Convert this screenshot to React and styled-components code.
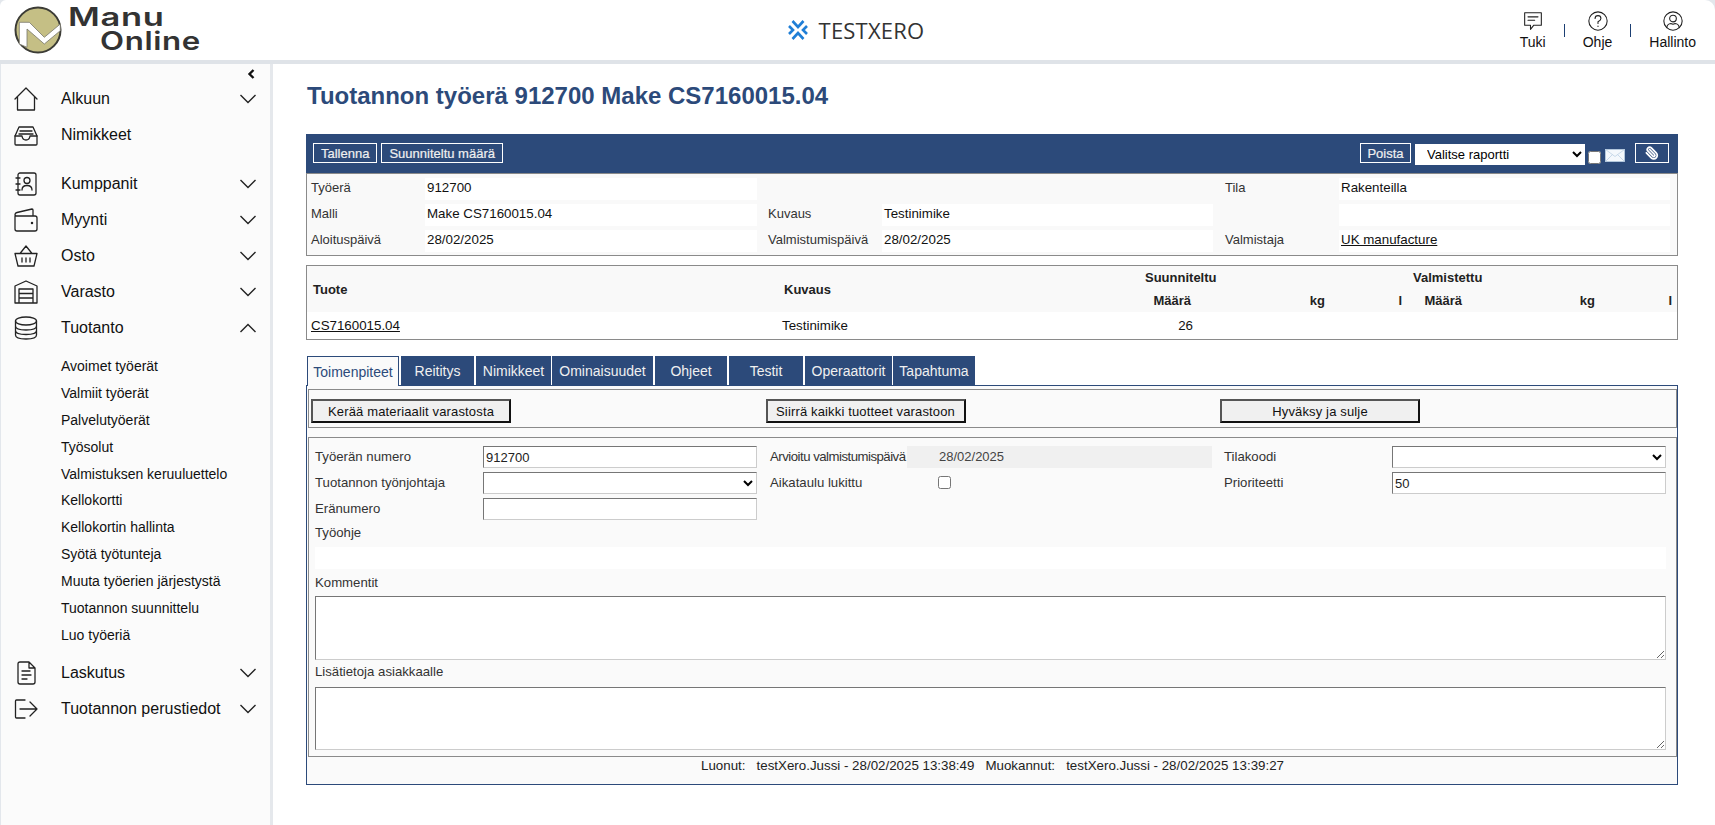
import React from "react";
import styled, { createGlobalStyle } from "styled-components";
import { Paperclip } from "lucide-react";

const NAVY = "#2c4a7a";

const Icon = ({ children, size = 24, view = "0 0 24 24", color = "#222", sw = 1.3 }) => (
  <svg width={size} height={size} viewBox={view} fill="none" stroke={color} strokeWidth={sw} strokeLinecap="round" strokeLinejoin="round">
    {children}
  </svg>
);

const HomeIcon = () => (
  <Icon><path d="M1 12 L12 1 L23 12 M3.500 10 V23 H20.500 V10" /></Icon>
);
const TrayIcon = () => (
  <Icon>
    <path d="M5 4 H19 L23 13 V21 Q23 22 22 22 H2 Q1 22 1 21 V13 Z" />
    <path d="M1 13 H8 Q8.500 17 12 17 Q15.500 17 16 13 H23 M6 8 H18 M5 11 H19" />
  </Icon>
);
const ContactsIcon = () => (
  <Icon>
    <rect x="4" y="1" width="18" height="22" rx="2" />
    <circle cx="13" cy="8.500" r="3" />
    <path d="M8 18 Q8 13.500 13 13.500 Q18 13.500 18 18 M2 6 H6 M2 12 H6 M2 18 H6" />
  </Icon>
);
const WalletIcon = () => (
  <Icon>
    <path d="M1 8 V21 Q1 23 3 23 H21 Q23 23 23 21 V10 Q23 8 21 8 H3 Q1 8 1 6.500 Q1 5 3 4.500 L18 1 Q19 1 19 2 V8" />
    <circle cx="18" cy="15" r="0.600" fill="#222" />
  </Icon>
);
const BasketIcon = () => (
  <Icon>
    <path d="M1 9.500 H23 L20 22 H4 Z M6 9.500 L12 2 L18 9.500 M8 14 V18 M12 14 V18 M16 14 V18" />
  </Icon>
);
const WarehouseIcon = () => (
  <Icon>
    <path d="M1 6 L12 1 L23 6 V23 H1 Z M5 23 V9 H19 V23 M5 13.500 H19 M5 18 H19" />
  </Icon>
);
const DatabaseIcon = () => (
  <Icon>
    <ellipse cx="12" cy="5" rx="10.500" ry="4" />
    <path d="M1.500 5 V19 C1.500 21.500 6 23 12 23 C18 23 22.500 21.500 22.500 19 V5 M1.500 10 C1.500 12.500 6 14 12 14 C18 14 22.500 12.500 22.500 10 M1.500 14.500 C1.500 17 6 18.500 12 18.500 C18 18.500 22.500 17 22.500 14.500" />
  </Icon>
);
const DocIcon = () => (
  <Icon>
    <path d="M4 3 Q4 1 6 1 H15 L21 7 V21 Q21 23 19 23 H6 Q4 23 4 21 Z M15 1 V7 H21 M8 10 H16 M8 14 H17 M8 18 H13" />
  </Icon>
);
const ExitIcon = () => (
  <Icon>
    <path d="M11 3 H2.500 Q1.500 3 1.500 4 V20 Q1.500 21 2.500 21 H11 M6 12 H23 M16 5 L23 12 L16 19" />
  </Icon>
);

const Chevron = ({ up }) => (
  <svg width="16" height="10" viewBox="0 0 16 10" fill="none" stroke="#222" strokeWidth="1.400">
    <path d={up ? "M0.500 9 L8 1.500 L15.500 9" : "M0.500 1 L8 8.500 L15.500 1"} />
  </svg>
);

const LogoMark = () => (
  <svg width="48" height="48" viewBox="0 0 48 48">
    <circle cx="24" cy="24" r="22.500" fill="#c5bf85" stroke="#3c3c36" strokeWidth="2" />
    <path d="M5.300 16.300 H15.300 L30.300 31.300 L46.300 18 V24.700 L30.300 38 L13 23 V41.300 L5.300 38 Z" fill="#fff" stroke="#77766a" strokeWidth="0.800" />
  </svg>
);

const XeroMark = () => (
  <svg width="20" height="20" viewBox="0 0 20 20" fill="none" stroke="#1f7ed6" strokeWidth="2.600">
    <path d="M4.500 1 L10 7 L15.500 1 M4.500 19 L10 13 L15.500 19 M1 6 L5 10 L1 14 M19 6 L15 10 L19 14" />
  </svg>
);

const GlobalStyle = createGlobalStyle`
  html, body {
    margin: 0;
    height: 100%;
    background: #e3e7ec;
  }
  body {
    font-family: "Liberation Sans", Arial, sans-serif;
    font-size: 13.330px;
    color: #111;
  }
  * {
    box-sizing: border-box;
  }
`;

const Page = styled.div`
  width: 1715px;
  height: 825px;
  background: #fff;
  border-radius: 6px 10px 0 0;
  overflow: hidden;
  display: flex;
  flex-direction: column;
`;

const Header = styled.header`
  height: 64px;
  flex: none;
  border-bottom: 4px solid #dfe3e8;
  display: grid;
  grid-template-columns: 1fr 1fr 1fr;
  align-items: center;
`;

const LogoWrap = styled.div`
  display: flex;
  align-items: center;
  padding-left: 14px;
  gap: 6px;
`;

const LogoText = styled.div`
  font-family: Inter, sans-serif;
  font-weight: 600;
  font-size: 25px;
  line-height: 24px;
  color: #333;
  letter-spacing: 0.5px;
  margin-top: -2px;
`;

const LogoLine = styled.div`
  padding-left: ${(p) => p.$indent || 0}px;
  transform: scaleX(${(p) => p.$scale});
  transform-origin: ${(p) => p.$indent || 0}px 0;
`;

const Brand = styled.div`
  display: flex;
  align-items: center;
  justify-content: center;
  gap: 11px;
  font-family: "Open Sans", sans-serif;
  font-size: 22px;
  letter-spacing: 0.2px;
  color: #333;
  padding-right: 3px;
`;

const HeadLinks = styled.div`
  display: flex;
  justify-content: flex-end;
  align-items: center;
  padding-right: 19px;
`;

const HeadLink = styled.div`
  display: flex;
  flex-direction: column;
  align-items: center;
  gap: 3px;
  font-size: 14px;
`;

const HeadSep = styled.span`
  width: 1px;
  height: 13px;
  background: #1c3f73;
  margin: 0 ${(p) => p.$gap || 20}px;
  align-self: center;
`;

const Body = styled.div`
  flex: 1;
  display: flex;
  min-height: 0;
`;

const Sidebar = styled.nav`
  width: 273px;
  flex: none;
  background: #fbfbfb;
  border-left: 1px solid #e3e7ec;
  border-right: 3px solid #e5e8ec;
  position: relative;
  padding-top: 17px;
`;

const CollapseArrow = styled.svg`
  position: absolute;
  top: 5px;
  left: 246px;
`;

const NavRow = styled.div`
  height: 36px;
  display: flex;
  align-items: center;
  padding: 0 14px 0 13px;
  font-size: 16px;
  margin-top: ${(p) => p.$top || 0}px;
`;

const NavIconBox = styled.span`
  width: 47px;
  display: flex;
  align-items: center;
`;

const NavLabel = styled.span`
  flex: 1;
`;

const SubList = styled.div`
  padding-top: 7px;
  padding-bottom: 6px;
`;

const SubItem = styled.div`
  height: 26.900px;
  line-height: 27px;
  padding-left: 60px;
  font-size: 14px;
`;

const Main = styled.main`
  flex: 1;
  padding: 15px 37px 0 33px;
  min-width: 0;
`;

const Title = styled.h1`
  margin: 0 0 22px 1px;
  height: 33px;
  font-size: 24px;
  line-height: 33px;
  font-weight: bold;
  color: ${NAVY};
`;

const Toolbar = styled.div`
  height: 39px;
  background: ${NAVY};
  display: flex;
  align-items: center;
  padding: 0 9px 1px 7px;
  gap: 4px;
`;

const ToolButton = styled.button`
  height: 20px;
  padding: 0 7px;
  background: ${NAVY};
  border: 1px solid #fff;
  color: #f0f0f0;
  font: 13px "Liberation Sans", Arial, sans-serif;
  -webkit-text-stroke: 0.2px #f0f0f0;
  display: flex;
  align-items: center;
  justify-content: center;
  width: ${(p) => (p.$width ? `${p.$width}px` : "auto")};
`;

const ToolSpacer = styled.div`
  flex: 1;
`;

const ReportSelect = styled.select`
  width: 170px;
  height: 21px;
  border: 0;
  background: #fff;
  font: 13px "Liberation Sans", Arial, sans-serif;
  padding-left: 8px;
  margin-top: 2px;
`;

const MailCheck = styled.input`
  width: 13px;
  height: 13px;
  margin: 8px 0 0 -1px;
`;

const MailGlyph = styled.svg`
  margin: 4px 6px 0 0;
`;

const ClipIcon = styled(Paperclip)`
  transform: scaleX(-1);
`;

const InfoPanel = styled.section`
  border: 1px solid #8a8a8a;
  background: #f9f9f9;
  padding: 4px 3px 3px 4px;
  display: grid;
  grid-template-columns: 114px 332px 11px 114px 331px 12px 114px 331px;
  grid-auto-rows: 22px;
  row-gap: 4px;
  margin-bottom: 9px;
`;

const InfoLabel = styled.div`
  grid-column: ${(p) => p.$col};
  line-height: 20px;
  font-size: 13px;
  color: #333;
`;

const InfoValue = styled.div`
  grid-column: ${(p) => p.$col};
  background: #fff;
  line-height: 20px;
  color: #111;
  padding-left: ${(p) => p.$pad || 2}px;
`;

const UnderlinedText = styled.span`
  text-decoration: underline;
`;

const TablePanel = styled.section`
  border: 1px solid #8a8a8a;
  background: #f9f9f9;
  margin-bottom: 16px;
`;

const ItemTable = styled.table`
  width: 1370px;
  table-layout: fixed;
  border-collapse: collapse;
`;

const HeadCell = styled.th`
  height: 23px;
  padding: 0 ${(p) => p.$right || 0}px 0 ${(p) => p.$left || 0}px;
  text-align: ${(p) => p.$align || "left"};
  font-size: 13px;
  font-weight: bold;
  color: #222;
`;

const DataRow = styled.tr`
  background: #fff;
`;

const DataCell = styled.td`
  height: 27px;
  padding: 0 ${(p) => p.$right || 0}px 0 ${(p) => p.$left || 0}px;
  text-align: ${(p) => p.$align || "left"};
`;

const Tabs = styled.div`
  display: flex;
  height: 29px;
  padding-left: 1px;
  gap: 2px;
`;

const Tab = styled.div`
  width: ${(p) => p.$width}px;
  margin-right: ${(p) => (p.$tight ? -1 : 0)}px;
  height: ${(p) => (p.$active ? 30 : 29)}px;
  position: relative;
  z-index: ${(p) => (p.$active ? 1 : 0)};
  display: flex;
  align-items: center;
  justify-content: center;
  font-size: 14px;
  color: ${(p) => (p.$active ? NAVY : "#f0f0f0")};
  background: ${(p) => (p.$active ? "#fafafa" : NAVY)};
  border: ${(p) => (p.$active ? `1px solid ${NAVY}` : "none")};
  border-bottom: none;
`;

const TabPanel = styled.section`
  height: 400px;
  border: 1px solid ${NAVY};
  background: #fafafa;
  padding: 3px 0 0 1px;
`;

const ActionPanel = styled.div`
  height: 39px;
  border: 1px solid #8a8a8a;
  margin-bottom: 9px;
  display: grid;
  grid-template-columns: repeat(3, 454.500px);
  align-items: center;
  padding: 5px 0 0 2px;
`;

const ActionButton = styled.button`
  display: block;
  width: 200px;
  height: 24px;
  padding: 0;
  background: #f0f0f0;
  border-style: solid;
  border-width: 2px;
  border-color: #555 #111 #111 #555;
  font: 13px "Liberation Sans", Arial, sans-serif;
  letter-spacing: 0.150px;
  color: #111;
`;

const FormPanel = styled.div`
  height: 320px;
  border: 1px solid #8a8a8a;
  padding: 8px 10px 0 6px;
`;

const FormGrid = styled.div`
  display: grid;
  grid-template-columns: 168px 274px 13px 137px 305px 12px 168px 274px;
  grid-auto-rows: 22px;
  row-gap: 4px;
`;

const FormLabel = styled.label`
  grid-column: ${(p) => p.$col};
  line-height: 22px;
  font-size: 13.200px;
  white-space: nowrap;
  letter-spacing: ${(p) => (p.$narrow ? "-0.500px" : "0")};
  color: #333;
`;

const TextInput = styled.input`
  grid-column: ${(p) => p.$col};
  height: 22px;
  background: #fff;
  border: 1px solid;
  border-color: #767676 #ccc #ccc #767676;
  padding: 0 2px;
  font: 13px "Liberation Sans", Arial, sans-serif;
  color: #222;
`;

const SelectInput = styled.select`
  grid-column: ${(p) => p.$col};
  height: 22px;
  background: #fff;
  border: 1px solid;
  border-color: #767676 #ccc #ccc #767676;
  font: 13px "Liberation Sans", Arial, sans-serif;
`;

const DisabledValue = styled.div`
  grid-column: ${(p) => p.$col};
  background: #f0f0f0;
  line-height: 22px;
  font-size: 13px;
  padding-left: 32px;
  color: #444;
`;

const CheckCell = styled.div`
  grid-column: ${(p) => p.$col};
  padding-left: 31px;
`;

const PlainCheck = styled.input`
  width: 13px;
  height: 13px;
  margin: 4px 0 0;
`;

const BlockLabel = styled.div`
  height: 27px;
  padding-top: ${(p) => p.$top}px;
  line-height: 16px;
  font-size: 13.200px;
  color: #333;
`;

const WhiteBar = styled.div`
  height: 22px;
  background: #fff;
`;

const Notes = styled.textarea`
  display: block;
  width: 1351px;
  height: ${(p) => p.$h}px;
  background: #fff;
  border: 1px solid;
  border-color: #767676 #ccc #ccc #767676;
  padding: 2px;
`;

const Audit = styled.div`
  display: flex;
  justify-content: center;
  gap: 11px;
  padding-top: 1px;
  height: 27px;
  line-height: 16px;
  font-size: 13.330px;
  color: #222;
`;

const AuditPart = styled.span`
  white-space: pre;
`;

const navItems = [
  { label: "Alkuun", icon: <HomeIcon />, more: true },
  { label: "Nimikkeet", icon: <TrayIcon /> },
  { label: "Kumppanit", icon: <ContactsIcon />, more: true, top: 13 },
  { label: "Myynti", icon: <WalletIcon />, more: true },
  { label: "Osto", icon: <BasketIcon />, more: true },
  { label: "Varasto", icon: <WarehouseIcon />, more: true },
];

const subItems = [
  "Avoimet työerät",
  "Valmiit työerät",
  "Palvelutyöerät",
  "Työsolut",
  "Valmistuksen keruuluettelo",
  "Kellokortti",
  "Kellokortin hallinta",
  "Syötä työtunteja",
  "Muuta työerien järjestystä",
  "Tuotannon suunnittelu",
  "Luo työeriä",
];

const tabs = [
  { label: "Toimenpiteet", width: 92 },
  { label: "Reititys", width: 73 },
  { label: "Nimikkeet", width: 75, tight: true },
  { label: "Ominaisuudet", width: 101 },
  { label: "Ohjeet", width: 72 },
  { label: "Testit", width: 74 },
  { label: "Operaattorit", width: 87, tight: true },
  { label: "Tapahtuma", width: 82 },
];

const NavItem = ({ item }) => (
  <NavRow $top={item.top}>
    <NavIconBox>{item.icon}</NavIconBox>
    <NavLabel>{item.label}</NavLabel>
    {item.more && <Chevron up={item.up} />}
  </NavRow>
);

export default function App() {
  return (
    <Page>
      <GlobalStyle />
      <Header>
        <LogoWrap>
          <LogoMark />
          <LogoText>
            <LogoLine $scale={1.38}>Manu</LogoLine>
            <LogoLine $indent={32} $scale={1.25}>Online</LogoLine>
          </LogoText>
        </LogoWrap>
        <Brand>
          <XeroMark />
          TESTXERO
        </Brand>
        <HeadLinks>
          <HeadLink>
            <Icon size={20}>
              <path d="M2 2 H22 V17 H13 L9 22 V17 H2 Z M6 7 H18 M6 11 H14" />
            </Icon>
            Tuki
          </HeadLink>
          <HeadSep $gap={18} />
          <HeadLink>
            <Icon size={20}>
              <circle cx="12" cy="12" r="11" />
              <path d="M8.500 9 Q8.500 5.500 12 5.500 Q15.500 5.500 15.500 9 Q15.500 11 12 13 V15 M12 18 V18.500" />
            </Icon>
            Ohje
          </HeadLink>
          <HeadSep $gap={18} />
          <HeadLink>
            <Icon size={20}>
              <circle cx="12" cy="12" r="11" />
              <circle cx="12" cy="9" r="4" />
              <path d="M4.500 20 Q5 15.500 9.500 15 Q12 16.500 14.500 15 Q19 15.500 19.500 20" />
            </Icon>
            Hallinto
          </HeadLink>
        </HeadLinks>
      </Header>

      <Body>
        <Sidebar>
          <CollapseArrow width="8" height="10" viewBox="0 0 8 10" fill="none" stroke="#111" strokeWidth="2.400">
            <path d="M6.500 1 L2.500 5 L6.500 9" />
          </CollapseArrow>
          {navItems.map((item) => (
            <NavItem key={item.label} item={item} />
          ))}
          <NavItem item={{ label: "Tuotanto", icon: <DatabaseIcon />, more: true, up: true }} />
          <SubList>
            {subItems.map((label) => (
              <SubItem key={label}>{label}</SubItem>
            ))}
          </SubList>
          <NavItem item={{ label: "Laskutus", icon: <DocIcon />, more: true }} />
          <NavItem item={{ label: "Tuotannon perustiedot", icon: <ExitIcon />, more: true }} />
        </Sidebar>

        <Main>
          <Title>Tuotannon työerä 912700 Make CS7160015.04</Title>

          <Toolbar>
            <ToolButton>Tallenna</ToolButton>
            <ToolButton>Suunniteltu määrä</ToolButton>
            <ToolSpacer />
            <ToolButton $width={51}>Poista</ToolButton>
            <ReportSelect defaultValue="">
              <option value="">Valitse raportti</option>
            </ReportSelect>
            <MailCheck type="checkbox" />
            <MailGlyph width="20" height="13" viewBox="0 0 20 13" fill="#f4f8fc" stroke="#bcd0e4" strokeWidth="0.800">
              <rect x="0.500" y="0.500" width="19" height="12" />
              <path d="M0.500 0.500 L10 7.500 L19.500 0.500 M0.500 12.500 L7.500 5.500 M19.500 12.500 L12.500 5.500" fill="none" />
            </MailGlyph>
            <ToolButton $width={34}>
              <ClipIcon size={14} color="#fff" strokeWidth={3} />
            </ToolButton>
          </Toolbar>

          <InfoPanel>
            <InfoLabel $col={1}>Työerä</InfoLabel>
            <InfoValue $col={2}>912700</InfoValue>
            <InfoLabel $col={7}>Tila</InfoLabel>
            <InfoValue $col={8}>Rakenteilla</InfoValue>

            <InfoLabel $col={1}>Malli</InfoLabel>
            <InfoValue $col={2}>Make CS7160015.04</InfoValue>
            <InfoLabel $col={4}>Kuvaus</InfoLabel>
            <InfoValue $col={5}>Testinimike</InfoValue>
            <InfoValue $col={8} />

            <InfoLabel $col={1}>Aloituspäivä</InfoLabel>
            <InfoValue $col={2}>28/02/2025</InfoValue>
            <InfoLabel $col={4}>Valmistumispäivä</InfoLabel>
            <InfoValue $col={5}>28/02/2025</InfoValue>
            <InfoLabel $col={7}>Valmistaja</InfoLabel>
            <InfoValue $col={8}>
              <UnderlinedText>UK manufacture</UnderlinedText>
            </InfoValue>
          </InfoPanel>

          <TablePanel>
            <ItemTable>
              <colgroup>
                <col width="475" />
                <col width="301" />
                <col width="110" />
                <col width="132" />
                <col width="77" />
                <col width="60" />
                <col width="133" />
                <col width="82" />
              </colgroup>
              <thead>
                <tr>
                  <HeadCell rowSpan={2} $left={6}>Tuote</HeadCell>
                  <HeadCell rowSpan={2} $left={2}>Kuvaus</HeadCell>
                  <HeadCell colSpan={3} $left={62}>Suunniteltu</HeadCell>
                  <HeadCell colSpan={3} $left={11}>Valmistettu</HeadCell>
                </tr>
                <tr>
                  <HeadCell $align="right" $right={2}>Määrä</HeadCell>
                  <HeadCell $align="right">kg</HeadCell>
                  <HeadCell $align="right">l</HeadCell>
                  <HeadCell $align="right">Määrä</HeadCell>
                  <HeadCell $align="right">kg</HeadCell>
                  <HeadCell $align="right" $right={5}>l</HeadCell>
                </tr>
              </thead>
              <tbody>
                <DataRow>
                  <DataCell $left={4}><UnderlinedText>CS7160015.04</UnderlinedText></DataCell>
                  <DataCell>Testinimike</DataCell>
                  <DataCell $align="right">26</DataCell>
                  <DataCell />
                  <DataCell />
                  <DataCell />
                  <DataCell />
                  <DataCell />
                </DataRow>
              </tbody>
            </ItemTable>
          </TablePanel>

          <Tabs>
            {tabs.map((tab, i) => (
              <Tab key={tab.label} $width={tab.width} $tight={tab.tight} $active={i === 0}>
                {tab.label}
              </Tab>
            ))}
          </Tabs>

          <TabPanel>
            <ActionPanel>
              <div><ActionButton>Kerää materiaalit varastosta</ActionButton></div>
              <div><ActionButton>Siirrä kaikki tuotteet varastoon</ActionButton></div>
              <div><ActionButton>Hyväksy ja sulje</ActionButton></div>
            </ActionPanel>

            <FormPanel>
              <FormGrid>
                <FormLabel $col={1}>Työerän numero</FormLabel>
                <TextInput $col={2} defaultValue="912700" />
                <FormLabel $col={4} $narrow>Arvioitu valmistumispäivä</FormLabel>
                <DisabledValue $col={5}>28/02/2025</DisabledValue>
                <FormLabel $col={7}>Tilakoodi</FormLabel>
                <SelectInput $col={8} />

                <FormLabel $col={1}>Tuotannon työnjohtaja</FormLabel>
                <SelectInput $col={2} />
                <FormLabel $col={4}>Aikataulu lukittu</FormLabel>
                <CheckCell $col={5}><PlainCheck type="checkbox" /></CheckCell>
                <FormLabel $col={7}>Prioriteetti</FormLabel>
                <TextInput $col={8} defaultValue="50" />

                <FormLabel $col={1}>Eränumero</FormLabel>
                <TextInput $col={2} />
              </FormGrid>
              <BlockLabel $top={5}>Työohje</BlockLabel>
              <WhiteBar />
              <BlockLabel $top={6}>Kommentit</BlockLabel>
              <Notes $h={64} />
              <BlockLabel $top={4}>Lisätietoja asiakkaalle</BlockLabel>
              <Notes $h={63} />
            </FormPanel>

            <Audit>
              <AuditPart>Luonut:   testXero.Jussi - 28/02/2025 13:38:49</AuditPart>
              <AuditPart>Muokannut:   testXero.Jussi - 28/02/2025 13:39:27</AuditPart>
            </Audit>
          </TabPanel>
        </Main>
      </Body>
    </Page>
  );
}
